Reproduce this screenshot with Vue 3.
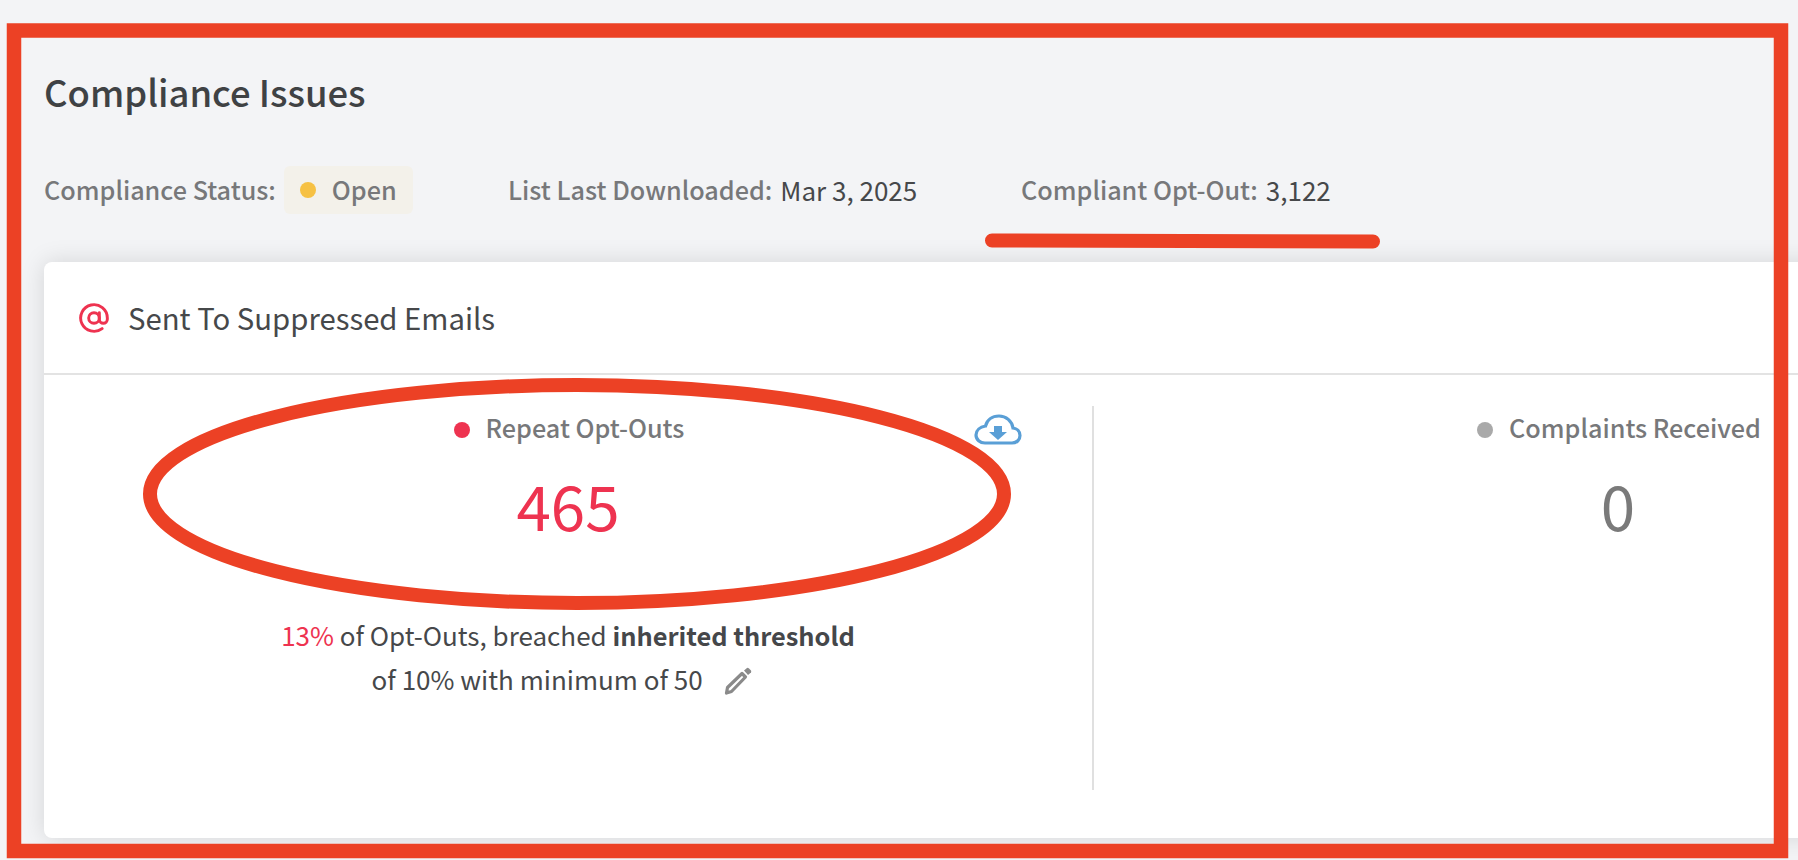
<script setup>
const stats = [
  { label: 'Repeat Opt-Outs', value: '465', tone: 'alert' },
  { label: 'Complaints Received', value: '0', tone: 'muted' }
]
</script>

<template>
  <div class="page">
    <h1 class="title">Compliance Issues</h1>

    <div class="meta">
      <div class="meta-item status">
        <span class="meta-label">Compliance Status:</span>
        <span class="badge"><i class="badge-dot"></i><span class="badge-text">Open</span></span>
      </div>
      <div class="meta-item downloaded">
        <span class="meta-label">List Last Downloaded:</span>
        <span class="meta-value">Mar 3, 2025</span>
      </div>
      <div class="meta-item">
        <span class="meta-label">Compliant Opt-Out:</span>
        <span class="meta-value">3,122</span>
      </div>
    </div>

    <section class="card">
      <header class="card-head">
        <svg class="at-icon" viewBox="0 0 24 24" fill="none" stroke="#ee3350" stroke-width="2.2" stroke-linecap="round" stroke-linejoin="round">
          <circle cx="12" cy="12" r="4" />
          <path d="M16 8v5a3 3 0 0 0 6 0v-1a10 10 0 1 0-3.92 7.94" />
        </svg>
        <h2>Sent To Suppressed Emails</h2>
      </header>

      <div class="card-body">
        <div v-for="(stat, i) in stats" :key="stat.label" class="stat" :class="stat.tone">
          <div class="stat-label"><i class="stat-dot"></i>{{ stat.label }}</div>
          <div class="stat-value">{{ stat.value }}</div>

          <template v-if="i === 0">
            <svg class="cloud" viewBox="0 0 48 31" fill="none">
              <path d="M11 29H38C43 29 46 25.5 46 21.5C46 17.5 43 14.5 39 14C38 7 32 2 25 2C18 2 13 6 11.5 12C6 13 2 16.5 2 21C2 25.5 6 29 11 29Z" stroke="#5a9fd6" stroke-width="3.2" />
              <path d="M20 12h8v6h5L24 26 15 18h5z" fill="#5a9fd6" />
            </svg>
            <p class="stat-note">
              <span class="pct">13%</span> of Opt-Outs, breached <strong>inherited threshold</strong><br />
              of 10% with minimum of 50
              <svg class="pencil" viewBox="0 0 28 28" fill="none">
                <path d="M3.5 20.5 18 6.5l3.5 3.5L7.5 24.5 2.5 26z" stroke="#8a8a8a" stroke-width="3.2" stroke-linejoin="round" />
                <path d="M20 3.5 23 1q1-.5 2 .5l2 2q.5 1 0 2L24 8z" fill="#8a8a8a" />
              </svg>
            </p>
          </template>
        </div>
      </div>
    </section>

    <!-- hand-drawn review marks over the screenshot -->
    <svg class="marks" viewBox="0 0 1798 860" fill="none" stroke="#ec4125">
      <rect x="14" y="30.5" width="1767" height="820.5" stroke-width="14.5" />
      <line x1="992" y1="240.5" x2="1373" y2="241.5" stroke-width="14" stroke-linecap="round" />
      <ellipse cx="577" cy="494" rx="427" ry="109" stroke-width="14" />
    </svg>
  </div>
</template>

<style>
body {
  margin: 0;
  overflow: hidden;
  background: #f3f4f6;
}
</style>

<style scoped>
.page {
  position: relative;
  width: 1798px;
  height: 860px;
  overflow: hidden;
  box-sizing: border-box;
  padding: 69px 0 0 44px;
  background: #f3f4f6;
  font-family: "Noto Sans CJK SC", "Noto Sans", sans-serif;
  color: #3f4244;
}
.title {
  margin: 0 0 53px;
  font-size: 36.4px;
  line-height: 44px;
  font-weight: 500;
}
.meta {
  display: flex;
  height: 48px;
  align-items: center;
  font-size: 26px;
  margin-bottom: 48px;
}
.meta-item {
  display: flex;
  align-items: center;
  gap: 8px;
}
.status {
  width: 464px;
}
.downloaded {
  width: 513px;
}
.meta-label {
  margin-top: -2px;
  font-size: 25.2px;
  color: #77787a;
  font-weight: 500;
}
.meta-value {
  margin-top: -2px;
  color: #46484a;
}
.badge {
  display: flex;
  align-items: center;
  height: 48px;
  padding: 0 16px;
  border-radius: 6px;
  background: #f3f1ea;
  color: #77787a;
  font-size: 25.2px;
  font-weight: 500;
}
.badge-text {
  margin-top: -2px;
}
.badge-dot {
  width: 16px;
  height: 16px;
  margin-right: 16px;
  border-radius: 50%;
  background: #f6c143;
}
.card {
  width: 2098px;
  height: 576px;
  border-radius: 8px;
  background: #fff;
  box-shadow: 0 0 24px rgba(0, 0, 0, 0.13);
}
.card-head {
  display: flex;
  align-items: center;
  gap: 18px;
  height: 111px;
  padding-left: 34px;
  border-bottom: 2px solid #e3e3e3;
}
.card-head h2 {
  margin: -1px 0 0;
  font-size: 29.3px;
  font-weight: 400;
  color: #46484a;
}
.at-icon {
  width: 32px;
  height: 32px;
}
.card-body {
  display: grid;
  grid-template-columns: 1050px 1048px;
  padding-top: 31px;
}
.stat {
  position: relative;
  height: 384px;
  box-sizing: border-box;
  padding-top: 5px;
  text-align: center;
}
.stat:first-child {
  border-right: 2px solid #e0e0e0;
}
.stat-label {
  display: flex;
  justify-content: center;
  align-items: center;
  gap: 16px;
  height: 32px;
  padding-left: 2px;
  font-size: 25.2px;
  font-weight: 500;
  color: #77787a;
}
.stat-dot {
  width: 16px;
  height: 16px;
  margin-top: 5px;
  border-radius: 50%;
  background: #a9a9a9;
}
.stat-value {
  margin-top: 21px;
  font-size: 62px;
  line-height: 80px;
  font-weight: 400;
  color: #7a7a7a;
}
.alert .stat-dot {
  background: #ee3350;
}
.alert .stat-value {
  color: #ee3350;
}
.cloud {
  position: absolute;
  top: 8px;
  left: 930px;
  width: 48px;
  height: 31px;
}
.stat-note {
  margin: 69px 0 0;
  font-size: 26px;
  line-height: 44px;
  color: #46484a;
}
.stat-note strong {
  font-size: 25.4px;
  font-weight: 700;
  color: #45474a;
}
.pct {
  color: #ee3350;
}
.pencil {
  width: 28px;
  height: 28px;
  margin: 0 12px 0 16px;
  vertical-align: -5px;
}
.marks {
  position: absolute;
  top: 0;
  left: 0;
  width: 1798px;
  height: 860px;
  pointer-events: none;
}
</style>
